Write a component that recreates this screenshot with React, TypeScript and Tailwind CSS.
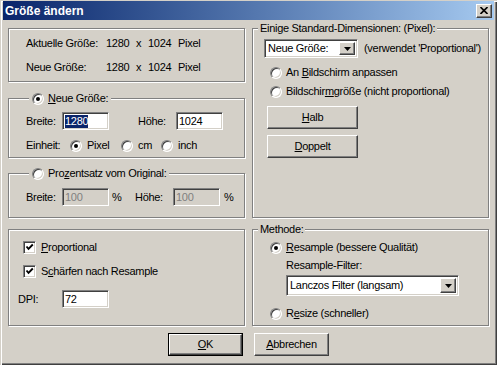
import React from "react";

const sunken =
  "border border-t-[#808080] border-l-[#808080] border-b-white border-r-white shadow-[inset_1px_1px_0_#404040,inset_-1px_-1px_0_#d4d0c8]";
const raised =
  "border border-t-white border-l-white border-b-[#404040] border-r-[#404040] shadow-[inset_-1px_-1px_0_#808080]";

function Radio({ checked = false }: { checked?: boolean }) {
  return (
    <span
      className={`inline-flex w-[12px] h-[12px] shrink-0 rounded-full bg-white items-center justify-center ${sunken}`}
    >
      {checked && <span className="w-[4px] h-[4px] rounded-full bg-black" />}
    </span>
  );
}

function Check() {
  return (
    <span className={`inline-flex w-[13px] h-[13px] shrink-0 bg-white items-center justify-center ${sunken}`}>
      <svg width="9" height="9" viewBox="0 0 9 9">
        <path d="M1.5 3.5 L3.5 5.8 L7.8 1.5" fill="none" stroke="black" strokeWidth="1.9" />
      </svg>
    </span>
  );
}

function Arrow() {
  return (
    <span className={`flex w-[16px] h-full shrink-0 bg-[#d4d0c8] items-center justify-center ${raised}`}>
      <svg width="7" height="4" viewBox="0 0 7 4">
        <polygon points="0,0 7,0 3.5,4" fill="black" />
      </svg>
    </span>
  );
}

function Group({
  className = "",
  legend,
  legendLeft = "left-[20px] px-[3px]",
  children,
}: {
  className?: string;
  legend?: React.ReactNode;
  legendLeft?: string;
  children?: React.ReactNode;
}) {
  return (
    <div
      className={`relative border border-[#808080] shadow-[inset_1px_1px_0_#fff,1px_1px_0_#fff] ${className}`}
    >
      {legend && (
        <div className={`absolute top-[-7px] h-[13px] flex items-center gap-[4px] bg-[#d4d0c8] ${legendLeft}`}>
          {legend}
        </div>
      )}
      {children}
    </div>
  );
}

function Field({ value, disabled = false, selected = false, w = "w-[47px]" }: { value: string; disabled?: boolean; selected?: boolean; w?: string }) {
  return (
    <div
      className={`${w} h-[18px] flex items-center pl-[2px] ${disabled ? "bg-[#d4d0c8] text-[#808080]" : "bg-white"} ${sunken}`}
    >
      {selected ? (
        <span className="bg-[#0a246a] text-white h-[13px] leading-[13px]">{value}</span>
      ) : (
        <span className="leading-[13px]">{value}</span>
      )}
    </div>
  );
}

function SizeRow({ label }: { label: string }) {
  return (
    <div className="flex h-[13px] leading-[13px]">
      <span className="w-[80px]">{label}</span>
      <span className="w-[30px]">1280</span>
      <span className="w-[12px]">x</span>
      <span className="w-[30px]">1024</span>
      <span>Pixel</span>
    </div>
  );
}

function Button({ children, def = false, w = "w-[75px]" }: { children: React.ReactNode; def?: boolean; w?: string }) {
  return (
    <div className={`${w} h-[23px] ${def ? "border border-black" : ""}`}>
      <div className={`w-full h-full flex items-center justify-center bg-[#d4d0c8] ${raised}`}>{children}</div>
    </div>
  );
}

export default function App() {
  return (
    <div className="w-[497px] h-[365px] overflow-hidden bg-[#d4d0c8] font-['Liberation_Sans',Arial,sans-serif] text-[11px] text-black tracking-[-0.3px] px-[3px] pt-[1px] shadow-[inset_1px_1px_0_#d4d0c8,inset_2px_2px_0_#fff,inset_-1px_-1px_0_#404040,inset_-2px_-2px_0_#808080]">
      {/* Title bar */}
      <div className="h-[19px] flex items-center justify-between pl-[2px] pr-[2px] bg-gradient-to-r from-[#0a246a] to-[#a6caf0]">
        <span className="text-white font-bold text-[12px] tracking-normal">Größe ändern</span>
        <div className={`w-[16px] h-[14px] flex items-center justify-center bg-[#d4d0c8] ${raised}`}>
          <svg width="8" height="7" viewBox="0 0 8 7">
            <path d="M0.5 0 L7.5 7 M7.5 0 L0.5 7" stroke="black" strokeWidth="1.6" />
          </svg>
        </div>
      </div>

      <div className="px-[5px]">
        {/* Top section */}
        <div className="flex gap-[7px] mt-[8px]">
          <div className="flex flex-col w-[238px]">
            <Group className="h-[54px]">
              <div className="flex flex-col gap-[11px] pt-[8px] pl-[17px]">
                <SizeRow label="Aktuelle Größe:" />
                <SizeRow label="Neue Größe:" />
              </div>
            </Group>

            <Group
              className="h-[60px] mt-[16px]"
              legend={
                <>
                  <Radio checked />
                  <span>
                    <u>N</u>eue Größe:
                  </span>
                </>
              }
            >
              <div className="pt-[13px] pl-[17px]">
                <div className="flex items-center h-[18px]">
                  <span className="w-[36px]">Breite:</span>
                  <Field value="1280" selected />
                  <span className="w-[38px] ml-[29px]">Höhe:</span>
                  <Field value="1024" />
                </div>
                <div className="flex items-center h-[13px] mt-[9px]">
                  <span className="w-[44px]">Einheit:</span>
                  <div className="w-[51px] flex items-center gap-[5px]">
                    <Radio checked />
                    <span>Pixel</span>
                  </div>
                  <div className="w-[40px] flex items-center gap-[5px]">
                    <Radio />
                    <span>cm</span>
                  </div>
                  <div className="flex items-center gap-[5px]">
                    <Radio />
                    <span>inch</span>
                  </div>
                </div>
              </div>
            </Group>

            <Group
              className="h-[45px] mt-[15px]"
              legend={
                <>
                  <Radio />
                  <span>
                    Pro<u>z</u>entsatz vom Original:
                  </span>
                </>
              }
            >
              <div className="pt-[14px] pl-[17px] flex items-center h-[32px]">
                <span className="w-[36px]">Breite:</span>
                <Field value="100" disabled />
                <span className="w-[26px] pl-[3px]">%</span>
                <span className="w-[38px]">Höhe:</span>
                <Field value="100" disabled />
                <span className="pl-[4px]">%</span>
              </div>
            </Group>
          </div>

          <Group
            className="w-[238px] h-[190px]"
            legendLeft="left-[5px] px-[2px]"
            legend={<span>Einige Standard-Dimensionen: (Pixel):</span>}
          >
            <div className="pt-[10px] flex flex-col">
              <div className="flex items-center pl-[11px]">
                <div className={`w-[94px] h-[19px] flex items-center bg-white p-[2px] ${sunken}`}>
                  <span className="flex-1 pl-[1px] leading-[13px]">Neue Größe:</span>
                  <Arrow />
                </div>
                <span className="ml-[6px]">(verwendet 'Proportional')</span>
              </div>
              <div className="flex items-center gap-[4px] h-[13px] mt-[8px] pl-[17px]">
                <Radio />
                <span>
                  An <u>B</u>ildschirm anpassen
                </span>
              </div>
              <div className="flex items-center gap-[4px] h-[13px] mt-[6px] pl-[17px]">
                <Radio />
                <span>
                  Bildschir<u>m</u>größe (nicht proportional)
                </span>
              </div>
              <div className="pl-[14px] mt-[8px] flex flex-col gap-[6px]">
                <Button w="w-[91px]">
                  <span>
                    <u>H</u>alb
                  </span>
                </Button>
                <Button w="w-[91px]">
                  <span>
                    <u>D</u>oppelt
                  </span>
                </Button>
              </div>
            </div>
          </Group>
        </div>

        {/* Bottom section */}
        <div className="flex gap-[7px] mt-[11px]">
          <Group className="w-[238px] h-[97px]">
            <div className="pt-[11px] flex flex-col">
              <div className="flex items-center gap-[5px] h-[13px] pl-[14px]">
                <Check />
                <span>
                  <u>P</u>roportional
                </span>
              </div>
              <div className="flex items-center gap-[5px] h-[13px] pl-[14px] mt-[11px]">
                <Check />
                <span>
                  S<u>c</u>härfen nach Resample
                </span>
              </div>
              <div className="flex items-center pl-[9px] mt-[12px]">
                <span className="w-[44px]">DPI:</span>
                <Field value="72" w="w-[47px]" />
              </div>
            </div>
          </Group>

          <Group
            className="w-[238px] h-[97px]"
            legendLeft="left-[5px] px-[2px]"
            legend={<span>Methode:</span>}
          >
            <div className="pt-[11px] pl-[17px] flex flex-col">
              <div className="flex items-center gap-[4px] h-[13px]">
                <Radio checked />
                <span>
                  <u>R</u>esample (bessere Qualität)
                </span>
              </div>
              <div className="h-[13px] leading-[13px] pl-[16px] mt-[5px]">Resample-Filter:</div>
              <div className={`ml-[16px] mt-[3px] w-[173px] h-[21px] flex items-center bg-white p-[2px] ${sunken}`}>
                <span className="flex-1 pl-[1px] leading-[13px]">Lanczos Filter (langsam)</span>
                <Arrow />
              </div>
              <div className="flex items-center gap-[4px] h-[13px] mt-[11px]">
                <Radio />
                <span>
                  R<u>e</u>size (schneller)
                </span>
              </div>
            </div>
          </Group>
        </div>

        {/* Buttons */}
        <div className="flex justify-center gap-[11px] mt-[7px]">
          <Button def>
            <span>
              <u>O</u>K
            </span>
          </Button>
          <Button>
            <span>
              <u>A</u>bbrechen
            </span>
          </Button>
        </div>
      </div>
    </div>
  );
}
